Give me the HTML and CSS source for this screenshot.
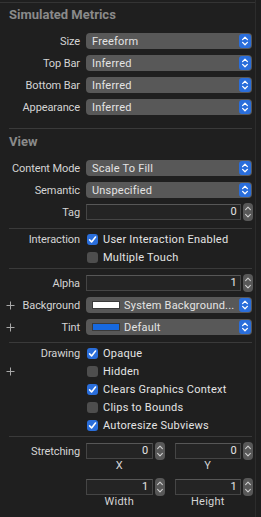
FILE: index.html
```html
<!DOCTYPE html>
<html lang="en">
<head>
    <meta charset="UTF-8">
    <meta name="viewport" content="width=device-width, initial-scale=1.0">
    <title>View Attributes</title>
    <link rel="stylesheet" href="styles.css">
</head>
<body>
    <div class="inspector">
        <!-- Simulated Metrics -->
        <section class="group first">
            <h2 class="group-title">Simulated Metrics</h2>
            <div class="row">
                <span class="label">Size</span>
                <div class="popup"><span class="popup-text">Freeform</span><span class="popup-arrows"><svg width="12" height="14" viewBox="0 0 12 14"><path d="M3.6 5.6L6 3.3l2.4 2.3M3.6 8.4L6 10.7l2.4-2.3"/></svg></span></div>
            </div>
            <div class="row">
                <span class="label">Top Bar</span>
                <div class="popup"><span class="popup-text">Inferred</span><span class="popup-arrows"><svg width="12" height="14" viewBox="0 0 12 14"><path d="M3.6 5.6L6 3.3l2.4 2.3M3.6 8.4L6 10.7l2.4-2.3"/></svg></span></div>
            </div>
            <div class="row">
                <span class="label">Bottom Bar</span>
                <div class="popup"><span class="popup-text">Inferred</span><span class="popup-arrows"><svg width="12" height="14" viewBox="0 0 12 14"><path d="M3.6 5.6L6 3.3l2.4 2.3M3.6 8.4L6 10.7l2.4-2.3"/></svg></span></div>
            </div>
            <div class="row">
                <span class="label">Appearance</span>
                <div class="popup"><span class="popup-text">Inferred</span><span class="popup-arrows"><svg width="12" height="14" viewBox="0 0 12 14"><path d="M3.6 5.6L6 3.3l2.4 2.3M3.6 8.4L6 10.7l2.4-2.3"/></svg></span></div>
            </div>
        </section>
        <hr class="divider">

        <!-- View -->
        <section class="group view">
            <h2 class="group-title">View</h2>
            <div class="row">
                <span class="label">Content Mode</span>
                <div class="popup"><span class="popup-text">Scale To Fill</span><span class="popup-arrows"><svg width="12" height="14" viewBox="0 0 12 14"><path d="M3.6 5.6L6 3.3l2.4 2.3M3.6 8.4L6 10.7l2.4-2.3"/></svg></span></div>
            </div>
            <div class="row">
                <span class="label">Semantic</span>
                <div class="popup"><span class="popup-text">Unspecified</span><span class="popup-arrows"><svg width="12" height="14" viewBox="0 0 12 14"><path d="M3.6 5.6L6 3.3l2.4 2.3M3.6 8.4L6 10.7l2.4-2.3"/></svg></span></div>
            </div>
            <div class="row">
                <span class="label">Tag</span>
                <div class="field-row">
                    <div class="field">0</div>
                    <span class="stepper"><svg width="10" height="18" viewBox="0 0 10 18"><path d="M2.6 6.6L5 4.2l2.4 2.4M2.6 11.4L5 13.8l2.4-2.4"/></svg></span>
                </div>
            </div>
        </section>
        <hr class="divider">

        <section class="group interaction">
            <div class="row check-row">
                <span class="label">Interaction</span>
                <label class="check"><span class="box on"><svg width="11" height="11" viewBox="0 0 11 11"><path d="M2.6 5.9l2 2.1 3.9-5"/></svg></span>User Interaction Enabled</label>
            </div>
            <div class="row check-row">
                <span class="label"></span>
                <label class="check"><span class="box"></span>Multiple Touch</label>
            </div>
        </section>
        <hr class="divider">

        <section class="group appearance">
            <div class="row">
                <span class="label">Alpha</span>
                <div class="field-row">
                    <div class="field">1</div>
                    <span class="stepper"><svg width="10" height="18" viewBox="0 0 10 18"><path d="M2.6 6.6L5 4.2l2.4 2.4M2.6 11.4L5 13.8l2.4-2.4"/></svg></span>
                </div>
            </div>
            <div class="row">
                <span class="label with-plus"><svg class="plus" width="9" height="9" viewBox="0 0 9 9"><path d="M4.5 0.5v8M0.5 4.5h8"/></svg>Background</span>
                <div class="popup"><span class="swatch white"></span><span class="popup-text">System Background...</span><span class="popup-arrows"><svg width="12" height="14" viewBox="0 0 12 14"><path d="M3.6 5.6L6 3.3l2.4 2.3M3.6 8.4L6 10.7l2.4-2.3"/></svg></span></div>
            </div>
            <div class="row">
                <span class="label with-plus"><svg class="plus" width="9" height="9" viewBox="0 0 9 9"><path d="M4.5 0.5v8M0.5 4.5h8"/></svg>Tint</span>
                <div class="popup"><span class="swatch blue"></span><span class="popup-text">Default</span><span class="popup-arrows"><svg width="12" height="14" viewBox="0 0 12 14"><path d="M3.6 5.6L6 3.3l2.4 2.3M3.6 8.4L6 10.7l2.4-2.3"/></svg></span></div>
            </div>
        </section>
        <hr class="divider">

        <section class="group drawing">
            <div class="row check-row">
                <span class="label">Drawing</span>
                <label class="check"><span class="box on"><svg width="11" height="11" viewBox="0 0 11 11"><path d="M2.6 5.9l2 2.1 3.9-5"/></svg></span>Opaque</label>
            </div>
            <div class="row check-row">
                <span class="label with-plus"><svg class="plus" width="9" height="9" viewBox="0 0 9 9"><path d="M4.5 0.5v8M0.5 4.5h8"/></svg></span>
                <label class="check"><span class="box"></span>Hidden</label>
            </div>
            <div class="row check-row">
                <span class="label"></span>
                <label class="check"><span class="box on"><svg width="11" height="11" viewBox="0 0 11 11"><path d="M2.6 5.9l2 2.1 3.9-5"/></svg></span>Clears Graphics Context</label>
            </div>
            <div class="row check-row">
                <span class="label"></span>
                <label class="check"><span class="box"></span>Clips to Bounds</label>
            </div>
            <div class="row check-row">
                <span class="label"></span>
                <label class="check"><span class="box on"><svg width="11" height="11" viewBox="0 0 11 11"><path d="M2.6 5.9l2 2.1 3.9-5"/></svg></span>Autoresize Subviews</label>
            </div>
        </section>
        <hr class="divider">

        <section class="group stretching">
            <div class="row pair-row">
                <span class="label">Stretching</span>
                <div class="pair">
                    <div class="field-row">
                        <div class="field">0</div>
                        <span class="stepper"><svg width="10" height="18" viewBox="0 0 10 18"><path d="M2.6 6.6L5 4.2l2.4 2.4M2.6 11.4L5 13.8l2.4-2.4"/></svg></span>
                    </div>
                    <div class="field-row">
                        <div class="field">0</div>
                        <span class="stepper"><svg width="10" height="18" viewBox="0 0 10 18"><path d="M2.6 6.6L5 4.2l2.4 2.4M2.6 11.4L5 13.8l2.4-2.4"/></svg></span>
                    </div>
                </div>
            </div>
            <div class="row caption-row">
                <span class="label"></span>
                <div class="pair">
                    <span class="caption">X</span>
                    <span class="caption">Y</span>
                </div>
            </div>
            <div class="row pair-row second">
                <span class="label"></span>
                <div class="pair">
                    <div class="field-row">
                        <div class="field">1</div>
                        <span class="stepper"><svg width="10" height="18" viewBox="0 0 10 18"><path d="M2.6 6.6L5 4.2l2.4 2.4M2.6 11.4L5 13.8l2.4-2.4"/></svg></span>
                    </div>
                    <div class="field-row">
                        <div class="field">1</div>
                        <span class="stepper"><svg width="10" height="18" viewBox="0 0 10 18"><path d="M2.6 6.6L5 4.2l2.4 2.4M2.6 11.4L5 13.8l2.4-2.4"/></svg></span>
                    </div>
                </div>
            </div>
            <div class="row caption-row">
                <span class="label"></span>
                <div class="pair">
                    <span class="caption">Width</span>
                    <span class="caption">Height</span>
                </div>
            </div>
        </section>
    </div>
</body>
</html>
```
FILE: styles.css
```css
html, body {
    height: 100%;
}
body {
    margin: 0;
    background: #1e1e1e;
    font-family: Roboto, "Noto Sans", sans-serif;
    font-size: 11px;
    color: #d6d6d6;
    overflow: hidden;
}
.inspector {
    width: 256px;
    height: 100%;
    box-sizing: border-box;
    padding-top: 2px;
    background: #1f1f1f;
    border-right: 1px solid #2c2c2c;
}
.group {
    padding-right: 2px;
}
.group.first {
    border-top: 1px solid #343434;
}
.group-title {
    margin: 0;
    padding: 5px 0 7px 9px;
    font-size: 13px;
    line-height: 16px;
    font-weight: 700;
    color: #8a8a8a;
}
.group.first .group-title {
    padding-top: 4px;
}
.divider {
    margin: 0 3px 0 9px;
    border: none;
    height: 1px;
    background: #3a3a3a;
}
.group.first { padding-bottom: 10px; }
.group.view { padding-bottom: 5px; }
.group.interaction { padding-top: 1px; padding-bottom: 2px; }
.group.appearance { padding-top: 3px; padding-bottom: 4px; }
.group.drawing { padding-top: 1px; padding-bottom: 2px; }
.group.stretching { padding-top: 5px; }

.row {
    display: grid;
    grid-template-columns: 80px 1fr;
    column-gap: 6px;
    align-items: center;
    height: 22px;
}
.label {
    text-align: right;
    white-space: nowrap;
    letter-spacing: -0.1px;
    color: #d4d4d4;
}
.label.with-plus {
    display: flex;
    align-items: center;
    justify-content: space-between;
    padding-left: 6px;
}
.plus path {
    stroke: #a8a8a8;
    stroke-width: 1;
    fill: none;
}

/* popup buttons */
.popup {
    height: 16px;
    margin-right: 1px;
    display: flex;
    align-items: center;
    padding-left: 6px;
    background: #585858;
    border-radius: 4px;
    color: #e4e4e4;
    letter-spacing: 0.2px;
    white-space: nowrap;
    overflow: hidden;
}
.popup-text {
    flex: 1;
    overflow: hidden;
}
.popup-arrows {
    width: 12px;
    height: 14px;
    margin-right: 1px;
    background: #2a6edb;
    border-radius: 3px;
    display: flex;
}
.popup-arrows path,
.stepper path,
.box path {
    fill: none;
    stroke: #fff;
    stroke-width: 1.3;
    stroke-linecap: round;
    stroke-linejoin: round;
}
.swatch {
    width: 26px;
    height: 6px;
    margin-right: 4px;
    border: 1px solid #3a3a3a;
}
.swatch.white { background: #fff; }
.swatch.blue { background: #1769e0; }

/* text fields with steppers */
.field-row {
    display: flex;
    align-items: center;
    gap: 2px;
}
.field {
    flex: 1;
    height: 16px;
    box-sizing: border-box;
    padding-right: 3px;
    background: #242424;
    border: 1px solid #454545;
    border-top-color: #575757;
    text-align: right;
    line-height: 14px;
    letter-spacing: 0.2px;
    color: #e4e4e4;
}
.stepper {
    width: 10px;
    height: 18px;
    background: #585858;
    border-radius: 4px;
    display: flex;
}
.stepper path {
    stroke: #cfcfcf;
    stroke-width: 1.1;
}

/* checkboxes */
.row.check-row {
    height: 18px;
}
.check {
    display: flex;
    align-items: center;
    gap: 5px;
    padding-left: 1px;
    color: #e4e4e4;
    letter-spacing: 0.25px;
    white-space: nowrap;
}
.box {
    width: 11px;
    height: 11px;
    border-radius: 3px;
    background: #4e4e4e;
    display: flex;
}
.box.on {
    background: #2a6edb;
}
.box path {
    stroke-width: 1.6;
}

/* stretching */
.pair {
    display: grid;
    grid-template-columns: 1fr 1fr;
    column-gap: 10px;
}
.row.pair-row {
    height: 18px;
}
.row.pair-row.second {
    margin-top: 7px;
}
.row.caption-row {
    height: 11px;
    line-height: 11px;
}
.caption {
    text-align: center;
    padding-right: 12px;
    letter-spacing: 0.2px;
    color: #d4d4d4;
}
```
